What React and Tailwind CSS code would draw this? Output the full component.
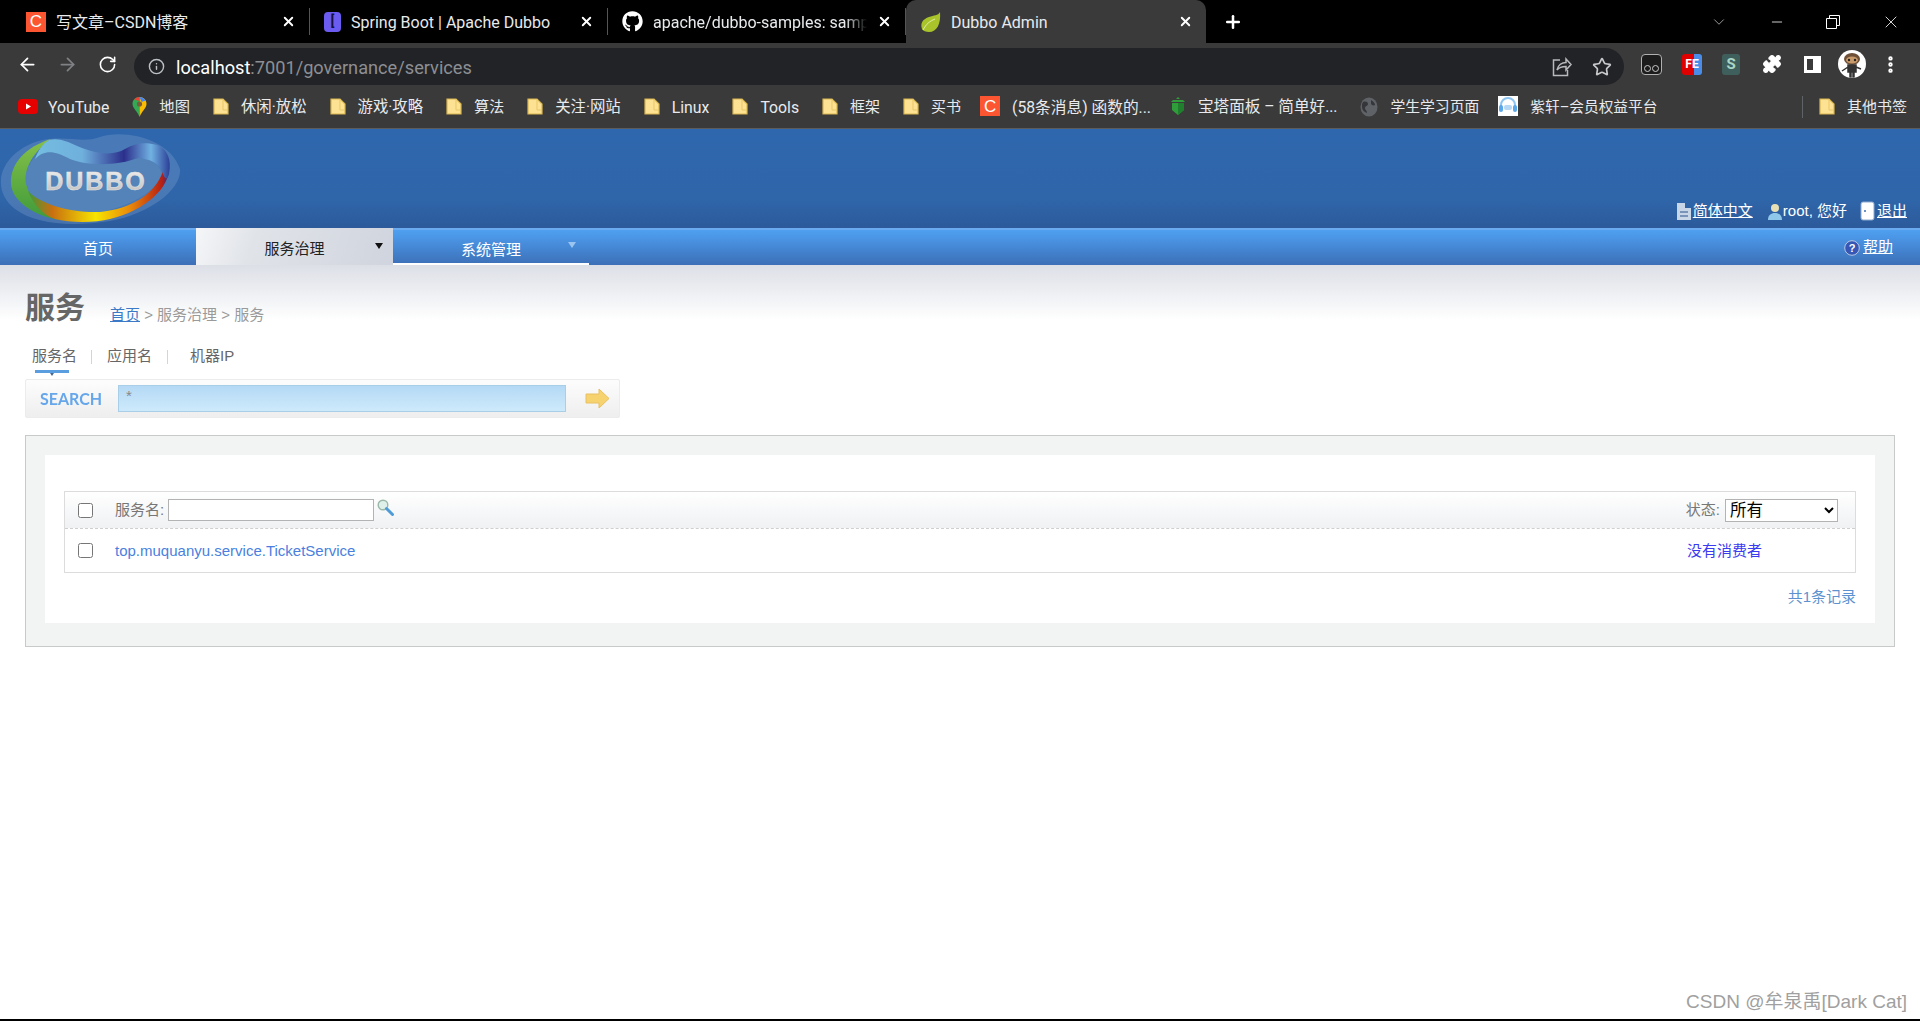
import React from "react";
import { ArrowLeft, ArrowRight, RotateCw, Info, Star, Plus, X, ChevronDown, Minus, Puzzle, EllipsisVertical } from "lucide-react";
import { FaGithub } from "react-icons/fa";

const Folder = () => (
  <svg width="16" height="17" viewBox="0 0 16 17" className="shrink-0">
    <path d="M1 1h9l5 5v10H1z" fill="#fde293" stroke="#d9b64f" strokeWidth="1.2" />
    <path d="M10 1v11h5" fill="none" stroke="#e8c766" strokeWidth="1" />
  </svg>
);

const CIcon = ({ className = "" }) => (
  <span className={"flex items-center justify-center bg-[#fc5531] text-white font-['Liberation_Sans',sans-serif] shrink-0 " + className}>C</span>
);

const Youtube = () => (
  <svg width="20" height="15" viewBox="0 0 20 15" className="shrink-0">
    <rect width="20" height="15" rx="4" fill="#e60000" />
    <path d="M8 4.5l5 3-5 3z" fill="#fff" />
  </svg>
);

const MapsPin = () => (
  <svg width="15" height="20" viewBox="0 0 15 20" className="shrink-0">
    <path d="M7.5 0C3.4 0 .5 3 .5 6.8c0 4.6 5 7.500 7 13.200z" fill="#34a853" />
    <path d="M7.500 0c4.100 0 7 3 7 6.800 0 4.600-5 7.500-7 13.200z" fill="#fbbc04" />
    <path d="M2 2.500A7 7 0 0 1 7.500 0v4z" fill="#ea4335" />
    <path d="M7.500 0a7 7 0 0 1 6 3.500L9.500 5z" fill="#4285f4" />
    <circle cx="7.500" cy="7" r="2.600" fill="#7a5b3a" />
  </svg>
);

const BtIcon = () => (
  <svg width="16" height="18" viewBox="0 0 16 18" className="shrink-0">
    <path d="M8 0l2 2H6zM3 3h10l2 2H1zM2 6h12v7l-6 5-6-5z" fill="#2f9e3a" />
    <path d="M8 6h6v7l-6 5z" fill="#1f7f2c" />
  </svg>
);

const Globe = () => (
  <svg width="18" height="20" viewBox="0 0 18 20" className="shrink-0">
    <ellipse cx="9" cy="10" rx="8.500" ry="9.500" fill="#5f6368" />
    <path d="M3 5c3-1 5 0 5 2S5 9 5 11s2 2 2 5c-3-1-5-3-5-6s0-3 1-5zM11 3c2 1 4 3 4 5-2 1-4 0-4-2z" fill="#35363a" />
  </svg>
);

const Headset = () => (
  <span className="w-[20px] h-[20px] bg-white flex items-center justify-center shrink-0">
    <svg width="20" height="20" viewBox="0 0 20 20">
      <path d="M3 12V9a7 7 0 0 1 14 0v3" fill="none" stroke="#8cc4f2" strokeWidth="2" />
      <rect x="1" y="9" width="4" height="7" rx="2" fill="#5aa7ea" />
      <rect x="15" y="9" width="4" height="7" rx="2" fill="#5aa7ea" />
      <rect x="6" y="9" width="8" height="5" rx="2" fill="#b7d8f5" />
    </svg>
  </span>
);

const bookmarks = [
  [<Youtube key="i" />, "YouTube", "text-[15.8px] -ml-[2px]", ""],
  [<MapsPin key="i" />, "地图", "text-[15.3px]", ""],
  [<Folder key="i" />, "休闲·放松", "text-[15.4px]", ""],
  [<Folder key="i" />, "游戏·攻略", "text-[15.4px]", ""],
  [<Folder key="i" />, "算法", "text-[15px]", ""],
  [<Folder key="i" />, "关注·网站", "text-[15.4px]", ""],
  [<Folder key="i" />, "Linux", "text-[15.8px]", ""],
  [<Folder key="i" />, "Tools", "text-[15.8px]", ""],
  [<Folder key="i" />, "框架", "text-[15px]", ""],
  [<Folder key="i" />, "买书", "text-[15px]", ""],
  [<CIcon key="i" className="w-[20px] h-[20px] text-[17px]" />, "(58条消息) 函数的...", "text-[15.7px]", "-ml-[4px]"],
  [<BtIcon key="i" />, "宝塔面板 – 简单好...", "text-[15.600px]", "-ml-[4px]"],
  [<Globe key="i" />, "学生学习页面", "text-[14.800px]", ""],
  [<Headset key="i" />, "紫轩–会员权益平台", "text-[14.700px]", "-ml-[4px]"],
];

function Tab({ icon, title, active, fade }) {
  return (
    <div className={"h-[43px] flex items-center pl-[14px] pr-[13px] gap-[10px] " + (active ? "w-[300px] bg-[#3a3a3a] rounded-t-[10px]" : "w-[298px] border-r border-r-[#4a4a4a] [border-image:linear-gradient(transparent_20%,#555_20%,#555_80%,transparent_80%)_1]")}>
      {icon}
      <span className={"flex-1 whitespace-nowrap overflow-hidden text-[16px] leading-[24px] pt-[2px] text-[#e8eaed] " + (fade ? "[mask-image:linear-gradient(to_right,#000_90%,transparent)]" : "")}>{title}</span>
      <X size={15} strokeWidth={3} className="text-white shrink-0" />
    </div>
  );
}

function Logo() {
  return (
    <svg width="181" height="99" viewBox="0 0 181 99" className="block">
      <defs>
        <linearGradient id="bot" x1="0" x2="1" y1="0" y2="0">
          <stop offset="0" stopColor="#3f9a3a" />
          <stop offset="0.17" stopColor="#c86f10" />
          <stop offset="0.48" stopColor="#f7e400" />
          <stop offset="0.72" stopColor="#e98a0a" />
          <stop offset="0.95" stopColor="#b81f14" />
          <stop offset="1" stopColor="#2b2f8c" />
        </linearGradient>
        <linearGradient id="top" x1="0" x2="1" y1="0" y2="0">
          <stop offset="0" stopColor="#74bde0" />
          <stop offset="0.35" stopColor="#6fb0dd" />
          <stop offset="0.66" stopColor="#2b2f8c" />
          <stop offset="0.86" stopColor="#70b2e2" />
          <stop offset="1" stopColor="#2b3f96" />
        </linearGradient>
        <linearGradient id="grn" x1="0" x2="0" y1="0" y2="1">
          <stop offset="0" stopColor="#86c14a" />
          <stop offset="1" stopColor="#3f9a3a" />
        </linearGradient>
        <linearGradient id="txt" x1="0" x2="0" y1="0" y2="1">
          <stop offset="0" stopColor="#f2f2f2" />
          <stop offset="1" stopColor="#bdbdbd" />
        </linearGradient>
      </defs>
      <path d="M1 50C3 30 25 12 50 10C70 8 85 14 100 8C125 0 170 10 180 40C182 60 150 85 110 92C70 98 35 95 15 80C5 72 0 62 1 50Z" fill="#7a9ecb" opacity=".35" />
      <path d="M25 50C28 30 40 20 55 22C75 34 100 38 130 30C145 27 158 30 162 45C160 60 130 78 100 83C70 85 45 80 32 68C27 62 24 58 25 50Z" fill="#5383b8" />
      <path d="M51 10C25 18 10 35 11 55C12 72 35 88 61 91C45 82 30 70 27 58C22 45 30 25 51 10Z" fill="url(#grn)" />
      <path d="M28 62C40 75 70 84 100 83C130 80 155 66 163 42L169 39C170 58 145 82 110 90C95 94 70 94 55 90C40 85 32 72 28 62Z" fill="url(#bot)" />
      <path d="M49 11C60 8 70 14 82 19C100 26 115 26 125 20C135 14 145 13 157 16C167 20 172 30 169 45C167 52 165 50 163 45C160 34 150 30 138 29C120 36 90 38 70 30C55 22 45 20 35 30C38 22 42 15 49 11Z" fill="url(#top)" />
      <text x="96" y="61" textAnchor="middle" fontFamily="'Liberation Sans',sans-serif" fontWeight="700" fontSize="25" letterSpacing="2" fill="url(#txt)" stroke="#e4e4e4" strokeWidth=".5">DUBBO</text>
    </svg>
  );
}

const DocIcon = () => (
  <svg width="14" height="17" viewBox="0 0 14 17" className="shrink-0"><path d="M0 0h8l0 5h6v12H0z" fill="#c9d6e8" /><path d="M3 9h8M3 13h8" stroke="#5f7fa8" strokeWidth="1.500" /></svg>
);
const UserIcon = () => (
  <svg width="14" height="17" viewBox="0 0 14 17" className="shrink-0"><circle cx="7" cy="5" r="4" fill="#e8dfb5" /><path d="M0 17c0-5 3-7 7-7s7 2 7 7z" fill="#8fc7ea" /></svg>
);
const DoorIcon = () => (
  <svg width="15" height="20" viewBox="0 0 15 20" className="shrink-0"><rect x="1" y="1" width="13" height="18" rx="2" fill="#fff" stroke="#8eaad0" /><circle cx="5" cy="10" r="1" fill="#3a6fb5" /></svg>
);
const HelpIcon = () => (
  <svg width="16" height="16" viewBox="0 0 16 16" className="shrink-0"><circle cx="8" cy="8" r="7.300" fill="#3657b5" stroke="#b9c8e4" /><text x="8" y="12" textAnchor="middle" fontSize="11" fontWeight="700" fill="#fff" fontFamily="'Liberation Sans',sans-serif">?</text></svg>
);

export default function App() {
  return (
    <div className="h-[1021px] flex flex-col overflow-hidden bg-white font-['Liberation_Sans','Noto_Sans_CJK_SC',sans-serif]">
      {/* Tab strip */}
      <div className="h-[43px] bg-black flex items-center pl-[12px] shrink-0 font-['Roboto','Noto_Sans_CJK_SC',sans-serif]">
        <Tab icon={<CIcon className="w-[20px] h-[20px] text-[17px]" />} title="写文章–CSDN博客" />
        <Tab icon={<span className="w-[17px] h-[20px] rounded-[4px] bg-[#6b5bf0] flex items-center justify-center text-[#15103c] text-[14px] font-bold shrink-0">[</span>} title="Spring Boot | Apache Dubbo" />
        <Tab icon={<FaGithub size={21} className="text-white shrink-0" />} title="apache/dubbo-samples: sampl" fade />
        <Tab active icon={
          <svg width="21" height="21" viewBox="0 0 21 21" className="shrink-0"><path d="M20 1C18 5 14 4 9 6 3 8 0 12 2 18c1 2 4 3 7 3 8 0 12-8 11-20z" fill="#a9c42b" /><path d="M3 19c3-6 7-9 12-11" stroke="#e4eeb0" strokeWidth="1" fill="none" /></svg>
        } title="Dubbo Admin" />
        <Plus size={20} strokeWidth={3} className="text-white ml-[17px]" />
        <div className="flex-1" />
        <ChevronDown size={18} strokeWidth={1} className="text-[#c8c8c8] mr-[41px]" />
        <Minus size={16} strokeWidth={1.2} className="text-white mr-[41px]" />
        <svg width="14" height="14" viewBox="0 0 14 14" className="mr-[41px]"><path d="M.5 3.500h10v10H.5zM3.500 3.500v-3h10v10h-3" fill="none" stroke="#fff" /></svg>
        <X size={20} strokeWidth={1} className="text-white mr-[19px]" />
      </div>

      {/* Toolbar */}
      <div className="h-[42px] bg-[#3a3a3a] flex items-center pl-[17px] shrink-0 font-['Roboto',sans-serif]">
        <ArrowLeft size={21} strokeWidth={2} className="text-white" />
        <ArrowRight size={21} strokeWidth={2} className="text-[#7f8184] ml-[19px]" />
        <RotateCw size={19} strokeWidth={2} className="text-white ml-[20px]" />
        <div className="ml-[17px] w-[1490px] h-[37px] mt-[5px] rounded-full bg-[#222327] flex items-center pl-[14px] pr-[12px]">
          <Info size={17} strokeWidth={2} className="text-[#bdc1c6]" />
          <span className="ml-[11px] text-[18.2px] pt-[2px] text-white">localhost<span className="text-[#8d8f93]">:7001/governance/services</span></span>
          <div className="flex-1" />
          <svg width="20" height="20" viewBox="0 0 20 20" fill="none" stroke="#b8b9bb" strokeWidth="1.500"><path d="M8 3H1.500v15.500h14V13" /><path d="M5 13c1-5 5-7.500 9-7.500V2l5 5.500L14 13V9.500c-4 0-7 1-9 3.500z" /></svg>
          <Star size={20} strokeWidth={2} className="text-[#c8c9cb] ml-[20px]" />
        </div>
        <div className="ml-[17px] w-[21px] h-[21px] rounded-[4px] bg-[#1c1c1c] border border-[#b0b0b0] flex items-end justify-center gap-px pb-[2px]">
          <span className="w-[7px] h-[7px] rounded-full border border-[#c8c8c8]" />
          <span className="w-[7px] h-[7px] rounded-full border border-[#c8c8c8]" />
        </div>
        <span className="ml-[20px] w-[20px] h-[21px] rounded-[3px] bg-[linear-gradient(90deg,#e00000_60%,#4a8de8_60%)] text-white text-[12px] font-bold flex items-center justify-center leading-none">FE</span>
        <span className="ml-[20px] w-[18px] h-[21px] rounded-[3px] bg-[#3f5f5c] text-[#a9d6c8] text-[15px] font-bold flex items-center justify-center leading-none">S</span>
        <Puzzle size={20} fill="#fff" strokeWidth={1.500} className="text-white ml-[22px]" />
        <span className="ml-[22px] w-[17px] h-[17px] border-[3px] border-r-[8px] border-white" />
        <span className="ml-[17px] w-[28px] h-[28px] rounded-full bg-white flex items-center justify-center overflow-hidden">
          <svg width="24" height="28" viewBox="0 0 24 28"><ellipse cx="12" cy="9" rx="8" ry="6" fill="#6e5038" /><ellipse cx="12" cy="10" rx="6" ry="3.500" fill="#c99a6a" /><circle cx="9" cy="10" r="1.200" fill="#222" /><circle cx="15" cy="10" r="1.200" fill="#222" /><path d="M8 15h8v7h-2v5h-1v-5h-2v5h-1v-5H8zM8 17L2 21M16 17l5 2" stroke="#333" strokeWidth="1.500" fill="#333" /></svg>
        </span>
        <EllipsisVertical size={21} strokeWidth={3} className="text-white ml-[14px]" />
      </div>

      {/* Bookmarks */}
      <div className="h-[44px] bg-[#3a3a3a] border-b border-b-[#5c5c5c] flex items-center pl-[18px] gap-[23px] text-[#e8eaed] shrink-0 font-['Roboto','Noto_Sans_CJK_SC',sans-serif]">
        {bookmarks.map(([icon, label, size, shift]) => (
          <div key={label} className={"flex items-center gap-[12px] whitespace-nowrap " + shift}>{icon}<span className={"pt-[2px] " + size}>{label}</span></div>
        ))}
        <div className="flex-1" />
        <div className="w-px h-[22px] bg-[#5f6368]" />
        <div className="flex items-center gap-[12px] mr-[13px] -ml-[7px] whitespace-nowrap"><Folder /><span className="pt-[2px] text-[15px]">其他书签</span></div>
      </div>

      {/* Site header */}
      <header className="h-[99px] bg-[linear-gradient(#2f67ae,#2f66aa_70%,#2c5a9b)] flex shrink-0">
        <Logo />
        <div className="flex-1 flex items-end justify-end gap-[15px] pb-[7px] pr-[13px] text-[15px] text-white leading-[20px]">
          <span className="flex items-center gap-[2px]"><DocIcon /><span className="underline">简体中文</span></span>
          <span className="flex items-center gap-[1px]"><UserIcon /><span>root, 您好</span></span>
          <span className="flex items-center gap-[2px] ml-[-2px]"><DoorIcon /><span className="underline">退出</span></span>
        </div>
      </header>

      {/* Nav */}
      <nav className="h-[37px] bg-[linear-gradient(#4fa0f0,#4a94e4_25%,#3c6fb6)] border-t-2 border-t-[#6aabf0] flex items-stretch text-[15px] text-white shrink-0">
        <div className="w-[196px] flex items-center justify-center pt-[4px]">首页</div>
        <div className="w-[197px] -mt-[2px] flex items-center justify-center relative text-[#222] bg-[linear-gradient(110deg,#f5f6f8,#e0e3e8_30%,#d0d4de)] pt-[5px]">
          服务治理
          <span className="absolute left-[179px] top-[15px] w-0 h-0 border-x-[4px] border-x-transparent border-t-[6px] border-t-[#111]" />
        </div>
        <div className="w-[196px] flex items-center justify-center relative border-b-2 border-b-white pt-[7px]">
          系统管理
          <span className="absolute left-[175px] top-[12px] w-0 h-0 border-x-[4px] border-x-transparent border-t-[6px] border-t-[#9cc4f0]" />
        </div>
        <div className="flex-1 flex items-center justify-end pr-[27px] gap-[3px]"><HelpIcon /><span className="underline">帮助</span></div>
      </nav>

      {/* Content */}
      <main className="flex-1 flex flex-col px-[25px] bg-[linear-gradient(#dcdfe6,#ffffff_55px)]">
        <div className="flex items-end mt-[23px] h-[40px]">
          <h1 className="text-[30px] leading-[40px] font-bold text-[#666]">服务</h1>
          <div className="ml-[25px] text-[15px] leading-[20px] text-[#9a9a9a] pb-[3px]"><span className="text-[#3c7ac8] underline">首页</span> &gt; 服务治理 &gt; 服务</div>
        </div>

        <div className="flex items-start mt-[18px] h-[33px] pl-[7px] text-[15px] text-[#666] leading-[20px]">
          <span className="relative">服务名
            <span className="absolute left-[3px] top-[24px] w-[34px] h-[3px] bg-[#5b9ee0]" />
            <span className="absolute left-[18px] top-[27px] w-0 h-0 border-x-[2px] border-x-transparent border-t-[3px] border-t-[#44688f]" />
          </span>
          <span className="ml-[14px] mt-[4px] w-px h-[14px] bg-[#e8cfc0]" />
          <span className="ml-[15px]">应用名</span>
          <span className="ml-[15px] mt-[4px] w-px h-[14px] bg-[#e8cfc0]" />
          <span className="ml-[22px]">机器IP</span>
        </div>

        <div className="w-[595px] h-[39px] flex items-center border border-[#ececec] rounded-[2px] bg-[linear-gradient(#fdfdfd,#eeeeee)]">
          <span className="ml-[14px] w-[78px] pb-[2px] font-['Lato',sans-serif] font-bold text-[16px] scale-y-110 origin-center text-[#66a6ea]">SEARCH</span>
          <input readOnly value="*" className="w-[448px] h-[27px] px-[7px] pb-[6px] text-[15px] text-[#888] outline-none border border-[#a9cfe8] bg-[linear-gradient(#b5d9f5,#cdeafb)]" />
          <svg width="25" height="21" viewBox="0 0 25 21" className="ml-[19px]"><path d="M1 6h13V1l10 9.500L14 20v-5H1z" fill="#f6d36f" stroke="#e8c060" /></svg>
        </div>

        <section className="mt-[17px] h-[212px] border border-[#c8caca] bg-[#f2f4f4] p-[19px] pb-[23px]">
          <div className="h-[168px] bg-white px-[19px] pt-[36px]">
            <div className="border border-[#dcdcdc] h-[82px] text-[15px]">
              <div className="h-[37px] flex items-center border-b border-dashed border-b-[#cfcfcf] bg-[linear-gradient(#ffffff,#eff1f3)] text-[#777] pl-[13px] pr-[17px]">
                <input type="checkbox" className="w-[15px] h-[15px] m-0" />
                <span className="ml-[22px]">服务名:</span>
                <input className="ml-[4px] w-[206px] h-[22px] bg-white border border-[#b3b3b3] outline-none" />
                <svg width="17" height="17" viewBox="0 0 17 17" className="ml-[3px] mb-[5px]"><circle cx="6" cy="6" r="4.800" fill="#dff0ea" stroke="#9ab8a8" strokeWidth="1.400" /><path d="M9.500 9.500l6 6" stroke="#4f9bd8" strokeWidth="3" strokeLinecap="round" /></svg>
                <div className="flex-1" />
                <span>状态:</span>
                <select className="ml-[5px] w-[113px] h-[23px] bg-white border border-[#b3b3b3] text-[16.500px] text-black pb-[2px] appearance-auto"><option>所有</option></select>
              </div>
              <div className="h-[43px] flex items-center pl-[13px]">
                <input type="checkbox" className="w-[15px] h-[15px] m-0" />
                <span className="ml-[22px] w-[1572px] pt-[1px] text-[#4a7fe0]">top.muquanyu.service.TicketService</span>
                <span className="pt-[1px] text-[#3b3bf0]">没有消费者</span>
              </div>
            </div>
            <div className="mt-[14px] text-right text-[15px] leading-[20px] text-[#5b92cf]">共1条记录</div>
          </div>
        </section>

        <div className="flex-1 flex items-end justify-end pb-[5px] -mr-[12px] text-[19px] text-[#a0a0a0] leading-[24px]">CSDN @牟泉禹[Dark Cat]</div>
      </main>
      <div className="h-[2px] bg-black shrink-0" />
    </div>
  );
}
